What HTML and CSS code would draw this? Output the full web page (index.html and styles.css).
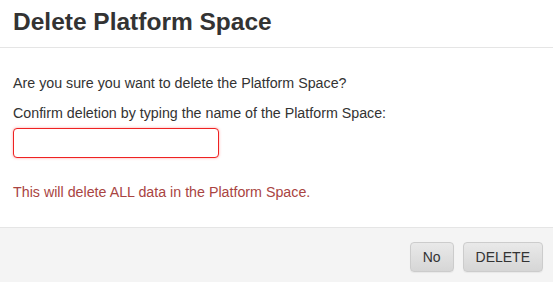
FILE: index.html
```html
<!DOCTYPE html>
<html>
<head>
<meta charset="utf-8">
<link rel="stylesheet" href="styles.css">
</head>
<body>
<div class="modal">
  <div class="modal-header">
    <h4 class="modal-title">Delete Platform Space</h4>
  </div>
  <div class="modal-body">
    <p class="line">Are you sure you want to delete the Platform Space?</p>
    <p class="line">Confirm deletion by typing the name of the Platform Space:</p>
    <input class="confirm-input" type="text">
    <p class="line danger">This will delete ALL data in the Platform Space.</p>
  </div>
  <div class="modal-footer">
    <button class="btn">No</button>
    <button class="btn">DELETE</button>
  </div>
</div>
</body>
</html>
```

FILE: styles.css
```css
html, body {
  margin: 0;
  padding: 0;
  background: #ffffff;
}
body {
  font-family: "Liberation Sans", Arial, sans-serif;
  font-size: 14.25px;
  line-height: 20px;
  color: #333333;
}
.modal {
  width: 553px;
  height: 282px;
  overflow: hidden;
  display: flex;
  flex-direction: column;
}
.modal-header {
  padding: 8px 13px 12px;
  border-bottom: 1px solid #e5e5e5;
}
.modal-title {
  margin: 0;
  font-size: 24.5px;
  line-height: 27px;
  font-weight: bold;
  color: #333333;
}
.modal-body {
  padding: 15px 13px 15px;
  display: flex;
  flex-direction: column;
  align-items: flex-start;
}
.line {
  margin: 10px 0 0;
}
.confirm-input {
  box-sizing: border-box;
  width: 206px;
  height: 30px;
  margin: 5px 0 0;
  padding: 4px 8px;
  border: 1px solid #ee2222;
  border-radius: 4px;
  box-shadow: 0 0 3px rgba(255, 0, 0, 0.35);
  outline: none;
  font-family: inherit;
  font-size: 14px;
}
.danger {
  margin-top: 24px;
  margin-bottom: 10px;
  color: #a94442;
}
.modal-footer {
  flex: 1;
  background: #f4f4f4;
  border-top: 1px solid #e5e5e5;
  padding: 14px 10px 0 0;
  display: flex;
  justify-content: flex-end;
  align-items: flex-start;
  gap: 9px;
}
.btn {
  box-sizing: border-box;
  height: 30px;
  padding: 0 12px;
  border: 1px solid #cccccc;
  border-radius: 4px;
  background: linear-gradient(#e9e9e9, #d6d6d6);
  font-family: "Liberation Sans", Arial, sans-serif;
  font-size: 14px;
  color: #333333;
  box-shadow: 0 1px 1px rgba(0, 0, 0, 0.05);
}
```
